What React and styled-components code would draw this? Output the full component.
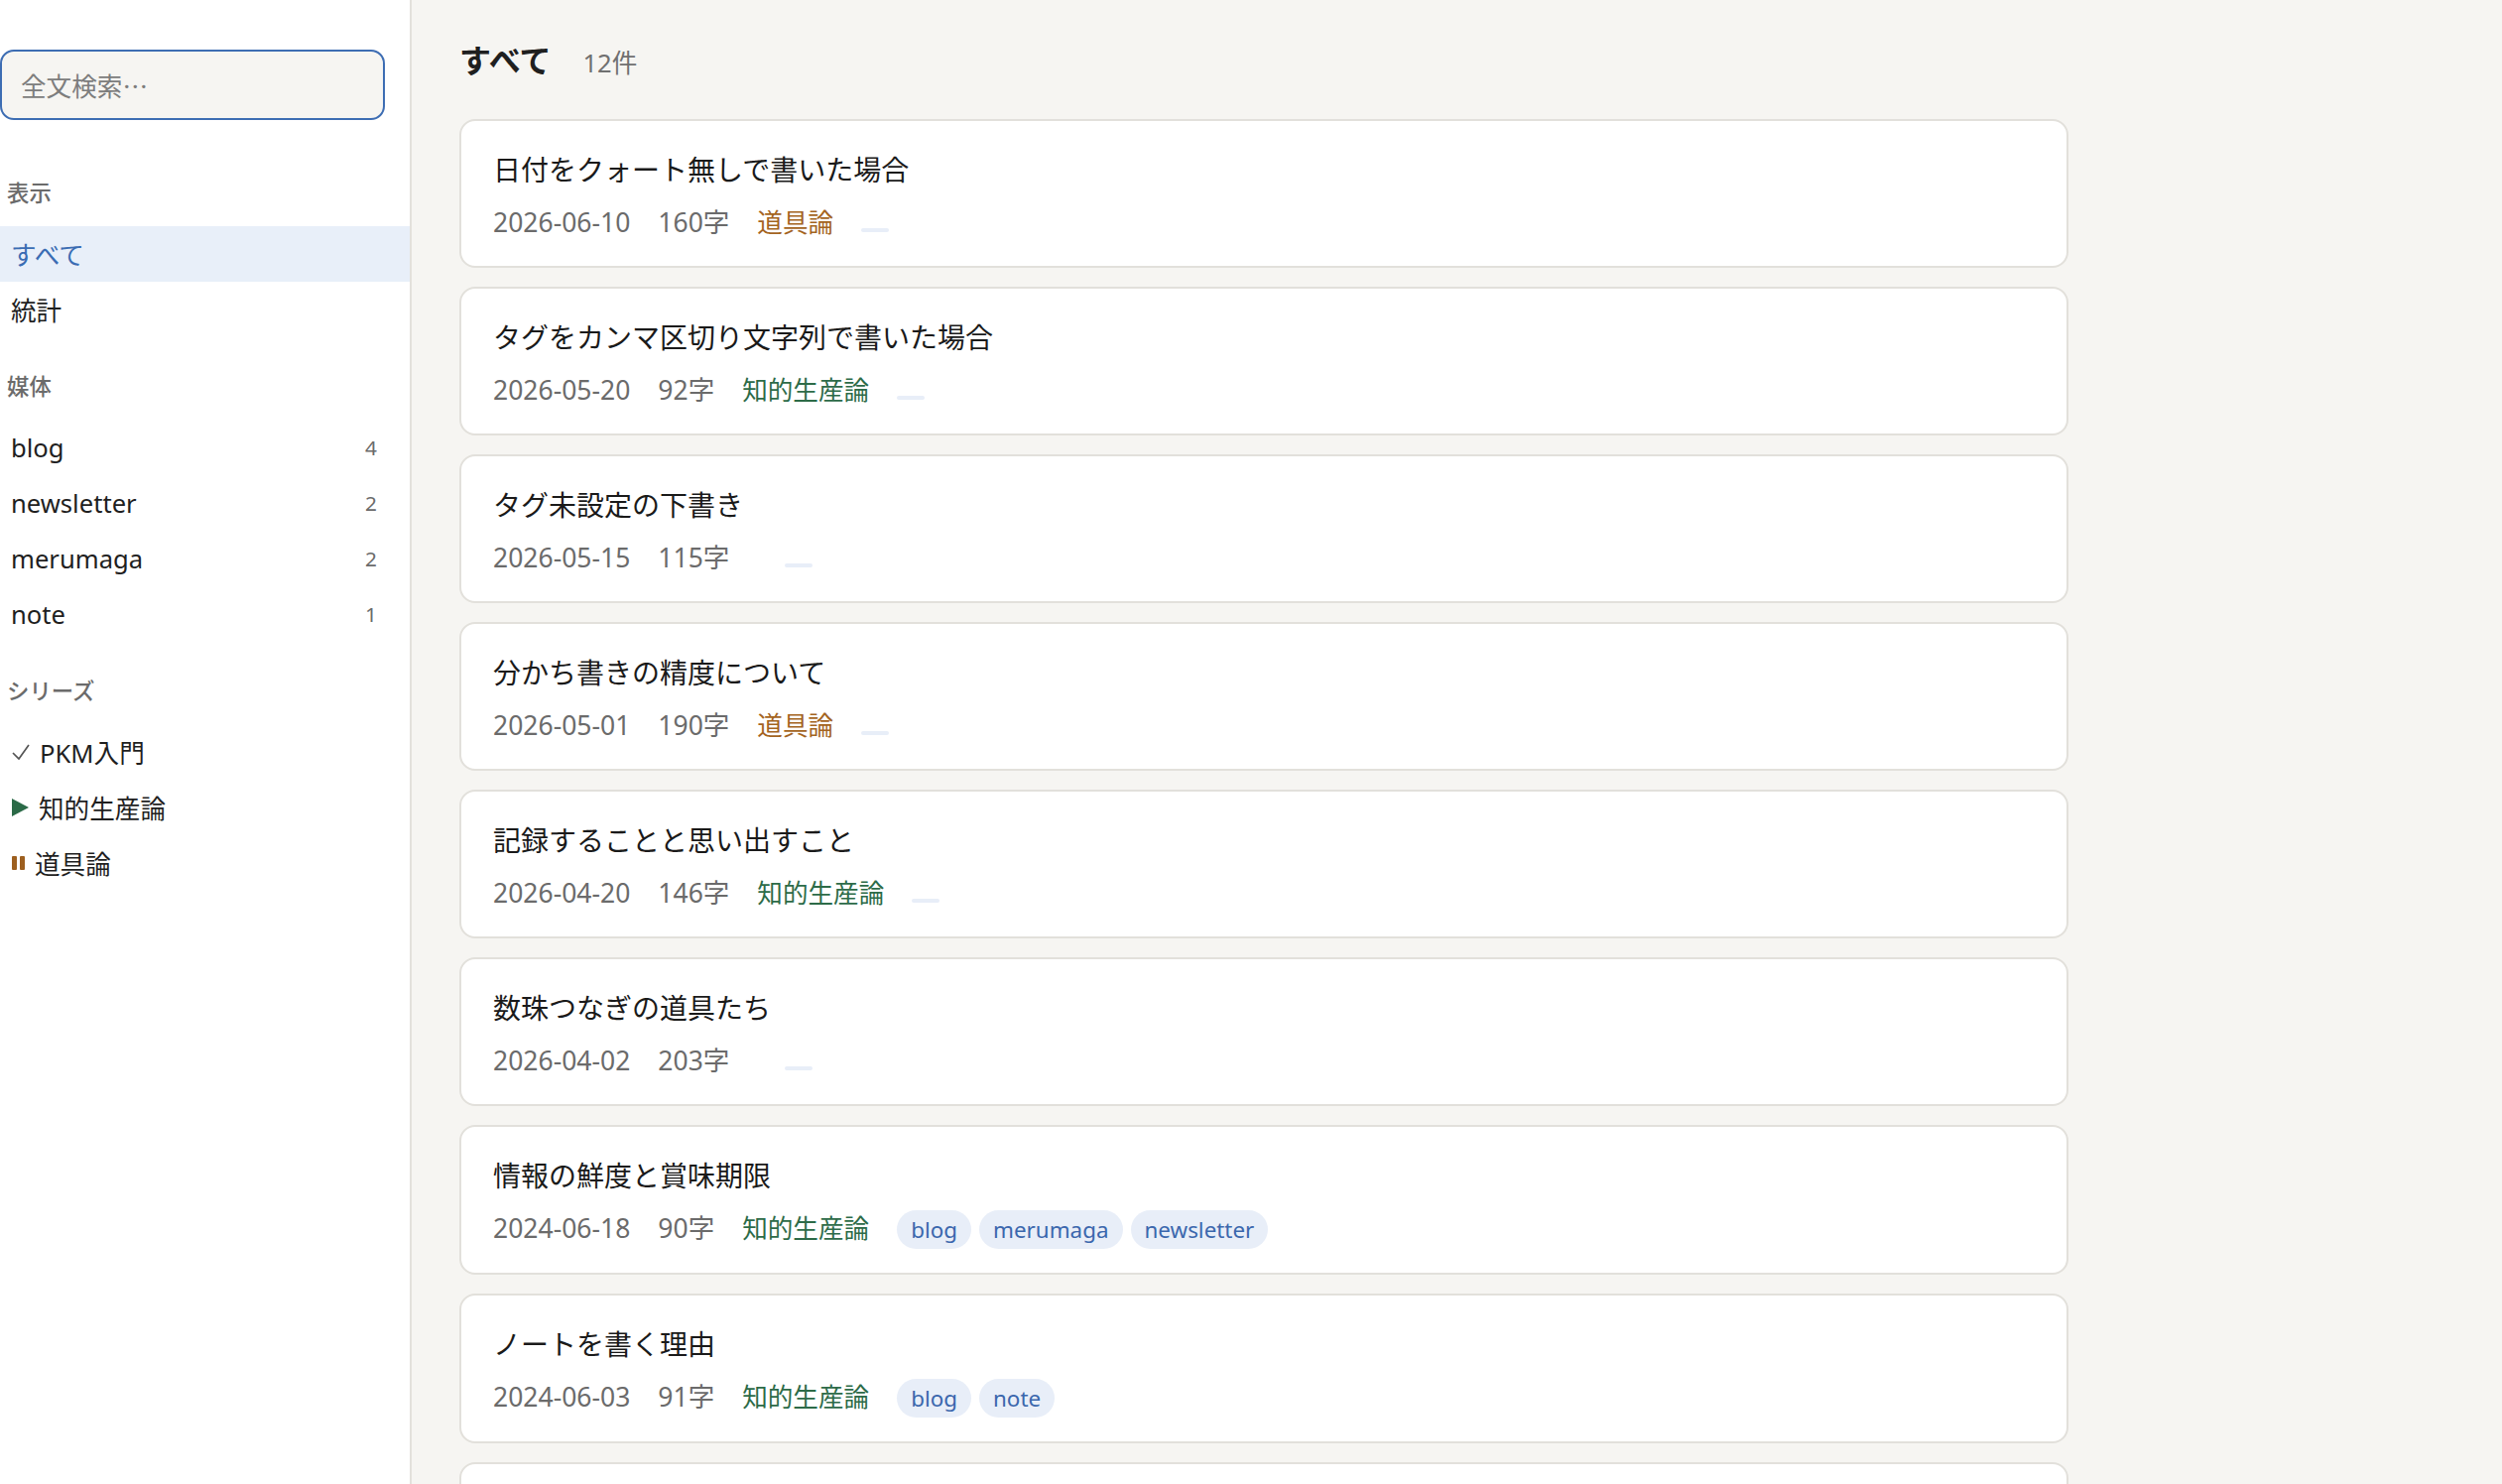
import React from "react";
import styled, { createGlobalStyle } from "styled-components";

const GlobalStyle = createGlobalStyle`
  *, *::before, *::after {
    box-sizing: border-box;
  }
  html, body {
    margin: 0;
    padding: 0;
    height: 100%;
  }
  body {
    font-family: "Noto Sans", "Noto Sans CJK JP", sans-serif;
    background: #f6f5f2;
    color: #1f1f1f;
  }
  #root {
    height: 100%;
  }
`;

const SERIES_COLORS = {
  知的生産論: "#2d6b48",
  道具論: "#a4641f",
  PKM入門: "#555555",
};

const media = [
  { name: "blog", count: 4 },
  { name: "newsletter", count: 2 },
  { name: "merumaga", count: 2 },
  { name: "note", count: 1 },
];

const series = [
  { name: "PKM入門", state: "done" },
  { name: "知的生産論", state: "active" },
  { name: "道具論", state: "paused" },
];

const posts = [
  { title: "日付をクォート無しで書いた場合", date: "2026-06-10", chars: 160, series: "道具論", tags: [""] },
  { title: "タグをカンマ区切り文字列で書いた場合", date: "2026-05-20", chars: 92, series: "知的生産論", tags: [""] },
  { title: "タグ未設定の下書き", date: "2026-05-15", chars: 115, series: "", tags: [""] },
  { title: "分かち書きの精度について", date: "2026-05-01", chars: 190, series: "道具論", tags: [""] },
  { title: "記録することと思い出すこと", date: "2026-04-20", chars: 146, series: "知的生産論", tags: [""] },
  { title: "数珠つなぎの道具たち", date: "2026-04-02", chars: 203, series: "", tags: [""] },
  { title: "情報の鮮度と賞味期限", date: "2024-06-18", chars: 90, series: "知的生産論", tags: ["blog", "merumaga", "newsletter"] },
  { title: "ノートを書く理由", date: "2024-06-03", chars: 91, series: "知的生産論", tags: ["blog", "note"] },
  { title: "PKMとは何か", date: "2024-05-20", chars: 132, series: "PKM入門", tags: ["blog", "newsletter"] },
  { title: "メモを育てる習慣", date: "2024-05-02", chars: 108, series: "PKM入門", tags: ["blog", "merumaga"] },
  { title: "リンクで考える", date: "2024-04-15", chars: 97, series: "", tags: [""] },
  { title: "はじめに", date: "2024-04-01", chars: 64, series: "", tags: [""] },
];

const Layout = styled.div`
  display: flex;
  height: 100vh;
  overflow: hidden;
`;

const Sidebar = styled.aside`
  display: flex;
  flex-direction: column;
  width: 415px;
  flex-shrink: 0;
  background: #ffffff;
  border-right: 2px solid #e3e1dc;
  padding-top: 50px;
`;

const Search = styled.input`
  display: block;
  align-self: flex-start;
  width: 388px;
  height: 71px;
  margin: 0 0 24px;
  padding: 0 19px;
  border: 2px solid #3d6db3;
  border-radius: 14px;
  background: #f6f5f2;
  font-family: "Noto Sans CJK JP", "Noto Sans", sans-serif;
  font-size: 25.6px;
  color: #1f1f1f;
  caret-color: #111;
  outline: none;

  &::placeholder {
    color: #7d7d7d;
  }
`;

const SectionLabel = styled.div`
  margin: 35px 0 18px;
  padding-left: 7px;
  font-size: 22.4px;
  line-height: 30px;
  font-weight: 500;
  color: #6b6b6b;
`;

const NavItem = styled.div`
  display: flex;
  align-items: center;
  justify-content: space-between;
  height: 56px;
  padding: 0 33px 0 11px;
  font-size: 25.6px;
  color: ${(p) => (p.$active ? "#3a6cb3" : "#1f1f1f")};
  background: ${(p) => (p.$active ? "#e8eff9" : "transparent")};
  cursor: pointer;
`;

const Count = styled.span`
  font-size: 20.8px;
  color: #6b6b6b;
`;

const SeriesItem = styled(NavItem)`
  justify-content: flex-start;
  gap: 10px;
  padding-left: 12px;
`;

const IconBox = styled.span`
  display: inline-flex;
  align-items: center;
`;

const Main = styled.main`
  flex: 1;
  overflow-y: auto;
  padding: 38px 48px 48px;
  scrollbar-width: none;

  &::-webkit-scrollbar {
    display: none;
  }
`;

const Header = styled.div`
  display: flex;
  align-items: baseline;
  gap: 32px;
  height: 46px;
  margin-bottom: 36px;
`;

const Heading = styled.h1`
  margin: 0;
  font-size: 32px;
  line-height: 46px;
  font-weight: 700;
  color: #1f1f1f;
`;

const Total = styled.span`
  font-size: 25.6px;
  color: #707070;
`;

const CardList = styled.div`
  display: flex;
  flex-direction: column;
  gap: 19px;
`;

const Card = styled.article`
  width: 1622px;
  background: #ffffff;
  border: 2px solid #e2e0db;
  border-radius: 16px;
  padding: 30px 32px 24px;
`;

const Title = styled.h2`
  margin: 0 0 14px;
  font-size: 28px;
  line-height: 39px;
  font-weight: 400;
  color: #1a1a1a;
`;

const Meta = styled.div`
  display: flex;
  align-items: baseline;
  gap: 28px;
  min-height: 39px;
  font-size: 26.5px;
  line-height: 39px;
  color: #6b6b6b;
`;

const Series = styled.span`
  font-size: 25.6px;
  color: ${(p) => p.$color || "#6b6b6b"};
`;

const TagGroup = styled.span`
  display: inline-flex;
  align-items: baseline;
  gap: 8px;
`;

const Tag = styled.span`
  display: inline-block;
  padding: ${(p) => (p.$empty ? "2px 14px" : "5px 14px")};
  border-radius: 999px;
  background: #e8eef8;
  color: #3b67ad;
  font-size: 22.4px;
  line-height: 29px;
`;

const CheckIcon = () => (
  <svg width="18" height="16" viewBox="0 0 18 16">
    <path d="M1 9 L7 15 L17 1" fill="none" stroke="#555" strokeWidth="1.7" />
  </svg>
);

const PlayIcon = () => (
  <svg width="17" height="18" viewBox="0 0 17 18">
    <polygon points="0,0 17,9 0,18" fill="#2b6a47" />
  </svg>
);

const PauseIcon = () => (
  <svg width="13" height="14" viewBox="0 0 13 14">
    <rect x="0" y="0" width="5" height="14" rx="1" fill="#9d5f1f" />
    <rect x="8" y="0" width="5" height="14" rx="1" fill="#9d5f1f" />
  </svg>
);

const stateIcon = {
  done: <CheckIcon />,
  active: <PlayIcon />,
  paused: <PauseIcon />,
};

const PostCard = ({ post }) => (
  <Card>
    <Title>{post.title}</Title>
    <Meta>
      <span>{post.date}</span>
      <span>{post.chars}字</span>
      <Series $color={SERIES_COLORS[post.series]}>{post.series}</Series>
      <TagGroup>
        {post.tags.map((t, i) => (
          <Tag key={i} $empty={!t}>
            {t}
          </Tag>
        ))}
      </TagGroup>
    </Meta>
  </Card>
);

export default function App() {
  return (
    <>
      <GlobalStyle />
      <Layout>
        <Sidebar>
          <Search placeholder="全文検索…" autoFocus />

          <SectionLabel>表示</SectionLabel>
          <NavItem $active>すべて</NavItem>
          <NavItem>統計</NavItem>

          <SectionLabel>媒体</SectionLabel>
          {media.map((m) => (
            <NavItem key={m.name}>
              <span>{m.name}</span>
              <Count>{m.count}</Count>
            </NavItem>
          ))}

          <SectionLabel>シリーズ</SectionLabel>
          {series.map((s) => (
            <SeriesItem key={s.name}>
              <IconBox>{stateIcon[s.state]}</IconBox>
              <span>{s.name}</span>
            </SeriesItem>
          ))}
        </Sidebar>

        <Main>
          <Header>
            <Heading>すべて</Heading>
            <Total>{posts.length}件</Total>
          </Header>
          <CardList>
            {posts.map((p) => (
              <PostCard key={p.title} post={p} />
            ))}
          </CardList>
        </Main>
      </Layout>
    </>
  );
}
